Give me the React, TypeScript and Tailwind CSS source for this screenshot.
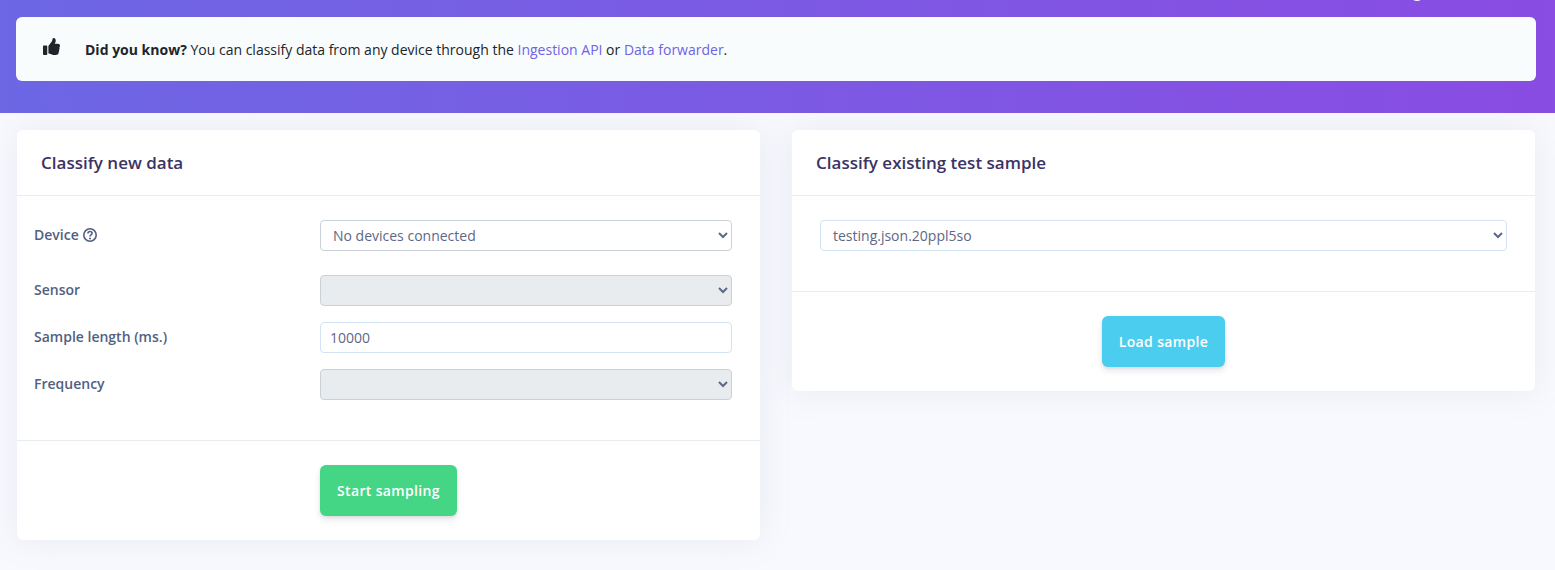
import React from "react";

const labelCls = "text-[14px] font-semibold leading-[21px] text-[#525f7f] w-[286px] shrink-0";
const selectCls = "w-full h-[31px] rounded-[4px] border bg-white pl-[8px] pr-[4px] text-[14px] text-[#5d6886] outline-none";

function ThumbsUp() {
  return (
    <svg width="17" height="17" viewBox="0 0 512 512" fill="#212529" aria-hidden="true">
      <path d="M104 224H24c-13.3 0-24 10.7-24 24v240c0 13.3 10.7 24 24 24h80c13.3 0 24-10.7 24-24V248c0-13.3-10.7-24-24-24zM384 81.500c0 42.400-26 66.200-33.300 94.500h101.700c33.400 0 59.400 27.700 59.600 58 .1 17.900-7.500 37.200-19.400 49.200l-.1.100c9.800 23.300 8.200 56-9.300 79.400 8.700 25.900-.1 57.700-16.400 74.800 4.300 17.600 2.200 32.600-6.100 44.600C440.200 509.300 389 512 346.800 512h-2.800c-47.700 0-86.700-17.400-118-31.300-15.700-7-36.300-15.600-51.900-15.900-6.400-.1-11.600-5.300-11.600-11.800V239c0-3.200 1.300-6.300 3.600-8.500 39.600-39.100 56.600-80.500 89.100-113 14.800-14.800 20.200-37.200 25.400-58.800C284.900 40.200 294.100 0 314.700 0 339.200 0 384 8 384 81.500z" />
    </svg>
  );
}

function Help() {
  return (
    <svg width="14" height="14" viewBox="0 0 14 14" fill="none" stroke="#525f7f" aria-hidden="true" className="ml-[4px]">
      <circle cx="7" cy="7" r="6.2" strokeWidth="1.6" />
      <path d="M4.900 5.500C5 4.200 5.900 3.500 7 3.500c1.200 0 2.100.8 2.100 1.800 0 1.600-2.100 1.500-2.100 3.100" strokeWidth="1.600" />
      <circle cx="7" cy="10.400" r="1" fill="#525f7f" stroke="none" />
    </svg>
  );
}

export default function App() {
  return (
    <div className="relative h-[570px] overflow-hidden bg-[#f8f9fe] font-['Open_Sans',sans-serif]">
      <div className="relative h-[113px] bg-[linear-gradient(87deg,#6d67e4_0%,#8a4ce3_100%)] pl-[16px] pr-[19px] pt-[17px]">
        <div className="absolute left-[1410px] top-[-13px] h-[14px] w-[14px] rounded-full bg-white" />
        <div className="flex h-[64px] items-center rounded-[6px] bg-[#f8fcfd] pl-[27px]">
          <div className="mr-[25px] mb-[5px] flex w-[17px] justify-center">
            <ThumbsUp />
          </div>
          <p className="text-[14px] leading-[21px] text-[#212529]">
            <b className="font-bold">Did you know?</b> You can classify data from any device through the{" "}
            <a className="text-[#6f63e3]">Ingestion API</a> or <a className="text-[#6f63e3]">Data forwarder</a>.
          </p>
        </div>
      </div>

      <div className="flex items-start gap-[32px] pl-[17px] pt-[17px]">
        <section className="w-[743px] rounded-[6px] bg-white shadow-[0_0_32px_rgba(136,152,170,0.15)]">
          <header className="h-[66px] border-b border-[#e9ecef] pl-[24px] pt-[21px]">
            <h3 className="text-[17px] font-semibold leading-[24px] text-[#3a3363]">Classify new data</h3>
          </header>
          <div className="h-[245px] border-b border-[#e9ecef] pl-[17px] pr-[28px] pt-[24px]">
            <div className="flex items-start">
              <label className={`${labelCls} flex items-center pt-[4px]`}>
                Device
                <Help />
              </label>
              <select className={`${selectCls} border-[#cad1d7]`}>
                <option>No devices connected</option>
              </select>
            </div>
            <div className="mt-[24px] flex items-center">
              <label className={`${labelCls} pb-[2px]`}>Sensor</label>
              <select disabled className={`${selectCls} border-[#cad1d7] !bg-[#e9ecef] opacity-100`}>
                <option></option>
              </select>
            </div>
            <div className="mt-[16px] flex items-center">
              <label className={`${labelCls} pb-[2px]`}>Sample length (ms.)</label>
              <input
                defaultValue="10000"
                className="h-[31px] w-full rounded-[4px] border border-[#d2e3f5] bg-white px-[9px] text-[14px] text-[#5d6886] outline-none"
              />
            </div>
            <div className="mt-[16px] flex items-center">
              <label className={`${labelCls} pb-[2px]`}>Frequency</label>
              <select disabled className={`${selectCls} border-[#cad1d7] !bg-[#e9ecef] opacity-100`}>
                <option></option>
              </select>
            </div>
          </div>
          <div className="h-[99px] pl-[303px] pt-[24px]">
            <button className="h-[51px] w-[137px] rounded-[6px] bg-[#45d685] text-[14px] font-semibold tracking-[0.35px] text-white shadow-[0_4px_6px_rgba(50,50,93,0.11),0_1px_3px_rgba(0,0,0,0.08)]">
              Start sampling
            </button>
          </div>
        </section>

        <section className="w-[743px] rounded-[6px] bg-white shadow-[0_0_32px_rgba(136,152,170,0.15)]">
          <header className="h-[66px] border-b border-[#e9ecef] pl-[24px] pt-[21px]">
            <h3 className="text-[17px] font-semibold leading-[24px] text-[#3a3363]">Classify existing test sample</h3>
          </header>
          <div className="h-[96px] border-b border-[#e9ecef] pl-[28px] pr-[28px] pt-[24px]">
            <select className={`${selectCls} border-[#d2e3f5]`}>
              <option>testing.json.20ppl5so</option>
            </select>
          </div>
          <div className="flex h-[99px] justify-center pt-[24px]">
            <button className="h-[51px] w-[123px] rounded-[6px] bg-[#4bcdf0] text-[14px] font-semibold tracking-[0.35px] text-white shadow-[0_4px_6px_rgba(50,50,93,0.11),0_1px_3px_rgba(0,0,0,0.08)]">
              Load sample
            </button>
          </div>
        </section>
      </div>
    </div>
  );
}
